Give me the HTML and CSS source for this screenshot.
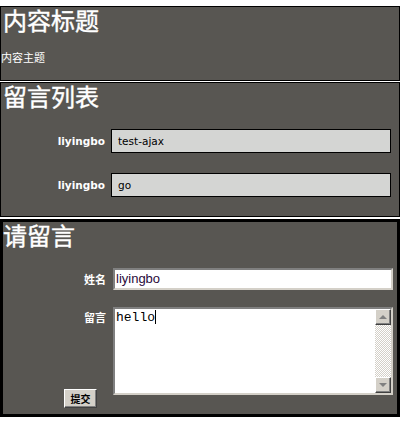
FILE: index.html
```html
<!DOCTYPE html>
<html>
<head>
<meta charset="utf-8">
<link rel="stylesheet" href="styles.css">
</head>
<body>
<div class="page">
  <div class="box box-content">
    <h1 class="title">内容标题</h1>
    <p class="subject">内容主题</p>
  </div>
  <div class="box box-list">
    <h1 class="title">留言列表</h1>
    <div class="rows">
      <div class="row">
        <span class="name">liyingbo</span>
        <span class="msg">test-ajax</span>
      </div>
      <div class="row">
        <span class="name">liyingbo</span>
        <span class="msg">go</span>
      </div>
    </div>
  </div>
  <div class="box box-form">
    <h1 class="title">请留言</h1>
    <div class="field">
      <span class="label">姓名</span>
      <div class="text-input">liyingbo</div>
    </div>
    <div class="field field-area">
      <span class="label">留言</span>
      <div class="textarea">
        <div class="area-text">hello<span class="caret"></span></div>
        <div class="scrollbar">
          <div class="sb-btn"><span class="arrow-up"></span></div>
          <div class="sb-track"></div>
          <div class="sb-btn"><span class="arrow-down"></span></div>
        </div>
      </div>
    </div>
    <div class="actions">
      <button class="submit">提交</button>
    </div>
  </div>
</div>
</body>
</html>
```
FILE: styles.css
```css
html, body {
  margin: 0;
  padding: 0;
  background: #fff;
}
.page {
  padding-top: 6px;
  display: flex;
  flex-direction: column;
  width: 400px;
}
.box {
  box-sizing: border-box;
  width: 400px;
  background: #585652;
  border: 1px solid #000;
  color: #fff;
  font-family: "Noto Sans CJK SC", sans-serif;
}
.box-content {
  height: 75px;
}
.box-list {
  margin-top: 1px;
  height: 135px;
}
.box-form {
  margin-top: 2px;
  height: 198px;
  border-width: 3px;
}
.title {
  margin: 0;
  padding-left: 2px;
  font-size: 24px;
  line-height: 26px;
  font-weight: normal;
  font-family: "Noto Sans CJK SC", serif;
  -webkit-text-stroke: 0.4px #fff;
}
.box-form .title {
  padding-left: 0;
}
.subject {
  margin: 17px 0 0 0;
  font-size: 11px;
  line-height: 14px;
}
.rows {
  display: flex;
  flex-direction: column;
  gap: 20px;
  margin-top: 20px;
}
.row {
  display: flex;
  align-items: center;
  gap: 6px;
}
.name {
  width: 104px;
  text-align: right;
  font-family: "DejaVu Sans", Verdana, sans-serif;
  font-weight: bold;
  font-size: 10.5px;
}
.msg {
  box-sizing: border-box;
  width: 280px;
  height: 24px;
  background: #d4d5d3;
  border: 1px solid #000;
  color: #000;
  font-family: "DejaVu Sans", Verdana, sans-serif;
  font-size: 10.5px;
  line-height: 22px;
  padding-left: 6px;
}
.field {
  display: flex;
  align-items: center;
  gap: 7px;
  margin-top: 20px;
}
.field-area {
  align-items: flex-start;
  margin-top: 17px;
}
.label {
  width: 103px;
  text-align: right;
  font-size: 11px;
  font-weight: bold;
  line-height: 14px;
}
.field-area .label {
  margin-top: 3px;
}
.text-input {
  box-sizing: border-box;
  width: 280px;
  height: 22px;
  background: #fff;
  border: 2px solid;
  border-color: #808080 #d4d0c8 #d4d0c8 #808080;
  color: #2a0a3a;
  font-family: "Liberation Sans", Arial, sans-serif;
  font-size: 13px;
  line-height: 18px;
  padding-left: 1px;
}
.textarea {
  box-sizing: border-box;
  width: 280px;
  height: 88px;
  background: #fff;
  border: 2px solid;
  border-color: #808080 #d4d0c8 #d4d0c8 #808080;
  display: flex;
}
.area-text {
  flex: 1;
  color: #000;
  font-family: "Liberation Mono", "Courier New", monospace;
  font-size: 13px;
  line-height: 15px;
  padding: 1px 1px;
}
.caret {
  display: inline-block;
  width: 1px;
  height: 14px;
  background: #000;
  vertical-align: -3px;
}
.scrollbar {
  width: 16px;
  display: flex;
  flex-direction: column;
  background-color: #e8e8e8;
  background-image: repeating-conic-gradient(#d4d0c8 0 25%, #fff 0 50%);
  background-size: 2px 2px;
}
.sb-btn {
  box-sizing: border-box;
  height: 16px;
  background: #d4d0c8;
  border: 1px solid;
  border-color: #fff #404040 #404040 #fff;
  box-shadow: inset -1px -1px 0 #808080;
  display: flex;
  align-items: center;
  justify-content: center;
}
.sb-track {
  flex: 1;
}
.arrow-up {
  width: 0;
  height: 0;
  border-left: 4px solid transparent;
  border-right: 4px solid transparent;
  border-bottom: 4px solid #808080;
}
.arrow-down {
  width: 0;
  height: 0;
  border-left: 4px solid transparent;
  border-right: 4px solid transparent;
  border-top: 4px solid #808080;
}
.actions {
  display: flex;
  padding-left: 61px;
  margin-top: -6px;
}
.submit {
  box-sizing: border-box;
  width: 33px;
  height: 19px;
  padding: 0;
  background: #d4d0c8;
  border: 1px solid;
  border-color: #fff #404040 #404040 #fff;
  box-shadow: inset -1px -1px 0 #808080;
  color: #000;
  font-family: "Noto Sans CJK SC", sans-serif;
  font-size: 10px;
  font-weight: bold;
  line-height: 15px;
}
```
